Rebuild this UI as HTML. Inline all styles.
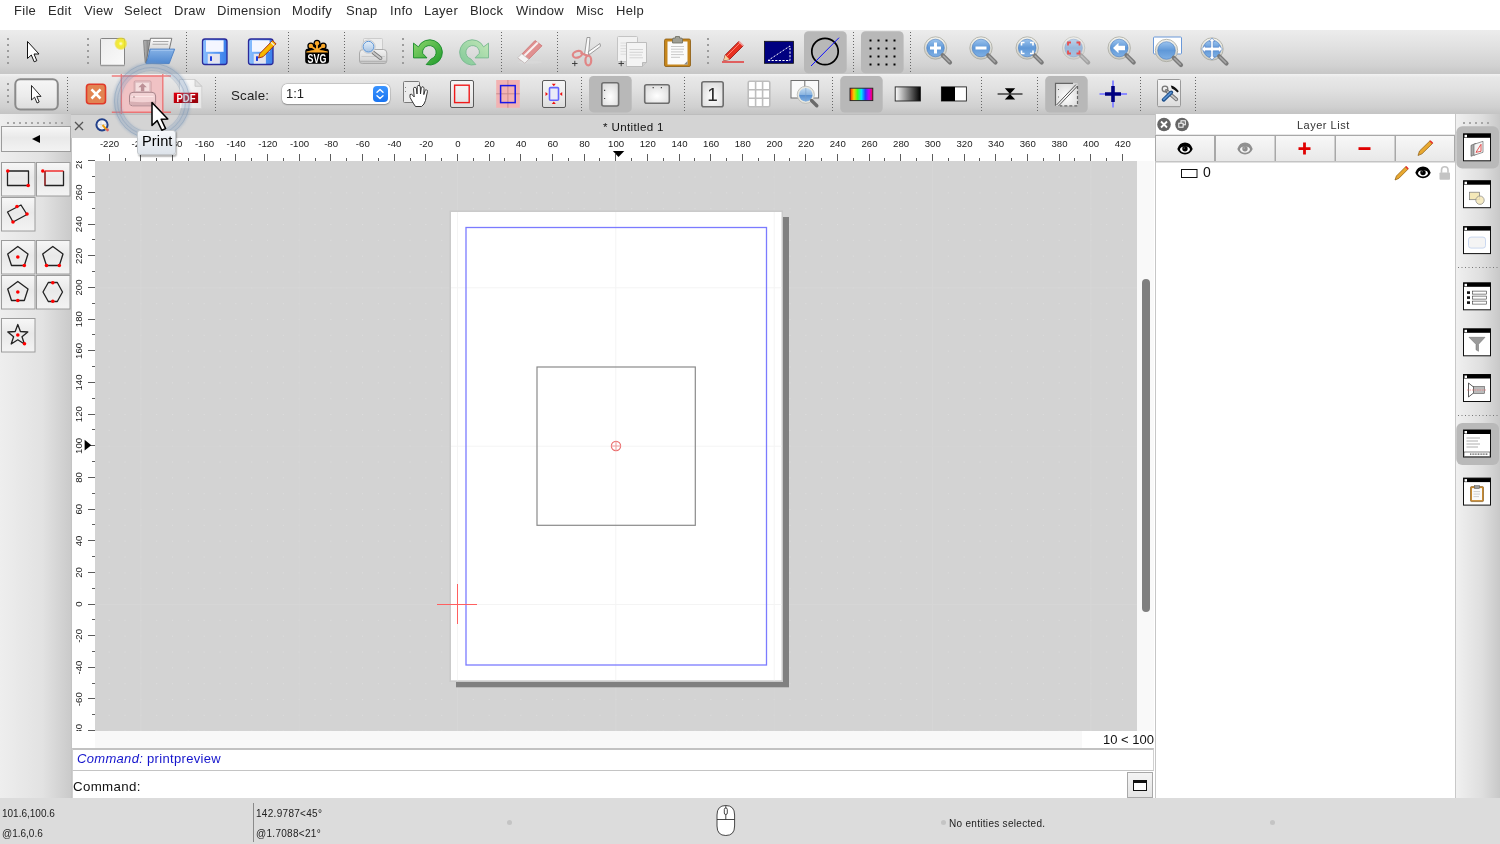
<!DOCTYPE html>
<html><head><meta charset="utf-8">
<style>
*{margin:0;padding:0;box-sizing:border-box}
html,body{width:1500px;height:844px;overflow:hidden;background:#fff;font-family:"Liberation Sans",sans-serif;color:#222}
.a{position:absolute;will-change:transform}
#menubar{left:0;top:0;width:1500px;height:30px;background:#fff}
#menubar span{position:absolute;will-change:transform;top:2.5px;font-size:13px;letter-spacing:0.3px;color:#2a2a2a;line-height:16px}
#tb1{left:0;top:30px;width:1500px;height:44px;background:linear-gradient(#ececec,#e2e2e2 35%,#d2d2d2 80%,#c6c6c6)}
#tb2{left:0;top:74px;width:1500px;height:40px;background:linear-gradient(#f2f2f2,#e8e8e8 8%,#e0e0e0 40%,#d0d0d0 82%,#c4c4c4)}
.hd{position:absolute;width:2px;background-image:linear-gradient(#9a9a9a 50%,transparent 50%);background-size:2px 6px}
.sep{position:absolute;width:1px;background-image:linear-gradient(#777 50%,transparent 50%);background-size:1px 3px}
.chk{position:absolute;background:#b9b9b9;border-radius:5px}
#toolbox{left:0;top:114px;width:71px;height:684px;background:linear-gradient(90deg,#eeeeee,#e2e2e2 60%,#cacaca)}
#doc{left:71px;top:114px;width:1084px;height:684px;background:#d4d4d4}
#dochead{left:71px;top:114px;width:1084px;height:24px;background:#d4d4d4;border-top:1px solid #bdbdbd}
#hruler{left:72px;top:138px;width:1082px;height:23px;background:#fff}
#vruler{left:72px;top:161px;width:23px;height:570px;background:#fff}
#canvas{left:95px;top:161px;width:1042px;height:570px;background:#d3d3d3;overflow:hidden}
#vscroll{left:1137px;top:161px;width:17px;height:570px;background:#f9f9f9}
#hstrip{left:72px;top:731px;width:1082px;height:17px;background:linear-gradient(90deg,#fff 23px,#f8f8f8 23px)}
#cmdhist{left:72px;top:748px;width:1082px;height:23px;background:#fff;border-top:2px solid #c2c2c2;border-bottom:1px solid #c4c4c4;border-left:1px solid #d0d0d0;border-right:1px solid #d0d0d0}
#cmdin{left:72px;top:771px;width:1082px;height:27px;background:#fff;border-left:1px solid #d0d0d0}
#layer{left:1155px;top:114px;width:300px;height:684px;background:#fff;border-left:1px solid #c6c6c6}
#dock{left:1455px;top:114px;width:45px;height:684px;background:linear-gradient(90deg,#f0f0f0,#dedede 60%,#c8c8c8);border-left:1px solid #c8c8c8}
#status{left:0;top:798px;width:1500px;height:46px;background:#dcdcdc}
.st{position:absolute;will-change:transform;font-size:10px;color:#222;line-height:12px}
</style></head><body>
<div id="menubar" class="a">
<span style="left:14px">File</span><span style="left:47.5px">Edit</span><span style="left:83.5px">View</span><span style="left:124px">Select</span><span style="left:174px">Draw</span><span style="left:217px">Dimension</span><span style="left:292px">Modify</span><span style="left:346px">Snap</span><span style="left:389.5px">Info</span><span style="left:424px">Layer</span><span style="left:469.5px">Block</span><span style="left:515.5px">Window</span><span style="left:576px">Misc</span><span style="left:616px">Help</span>
</div>
<div id="tb1" class="a"></div>
<svg class="a" style="left:0;top:30px" width="1500" height="44" viewBox="0 30 1500 44">
<defs>
<radialGradient id="glow" cx="0.5" cy="0.5" r="0.5"><stop offset="0" stop-color="#fffde0"/><stop offset="0.35" stop-color="#f4ee30"/><stop offset="0.75" stop-color="#eee020" stop-opacity="0.8"/><stop offset="1" stop-color="#eee020" stop-opacity="0"/></radialGradient>
<linearGradient id="paperg" x1="0" y1="0" x2="1" y2="1"><stop offset="0" stop-color="#ececec"/><stop offset="1" stop-color="#fafafa"/></linearGradient>
<linearGradient id="flop" x1="0" y1="0" x2="1" y2="0"><stop offset="0" stop-color="#8cc0ff"/><stop offset="0.5" stop-color="#5b9cf4"/><stop offset="1" stop-color="#3a7eea"/></linearGradient>
<linearGradient id="lens" x1="0" y1="0" x2="0" y2="1"><stop offset="0" stop-color="#9cc4ee"/><stop offset="0.5" stop-color="#5f98d8"/><stop offset="1" stop-color="#7fb0e4"/></linearGradient>
<linearGradient id="lensring" x1="0" y1="0" x2="0" y2="1"><stop offset="0" stop-color="#f4f4ee"/><stop offset="1" stop-color="#c8c8c0"/></linearGradient>
<linearGradient id="undog" x1="0" y1="0" x2="1" y2="1"><stop offset="0" stop-color="#8ed86e"/><stop offset="1" stop-color="#1f9a2a"/></linearGradient>
<linearGradient id="redog" x1="1" y1="0" x2="0" y2="1"><stop offset="0" stop-color="#c4e8b8"/><stop offset="1" stop-color="#80c898"/></linearGradient>
<linearGradient id="prn" x1="0" y1="0" x2="0" y2="1"><stop offset="0" stop-color="#f2f2f2"/><stop offset="1" stop-color="#cfcfcf"/></linearGradient>
<linearGradient id="fold" x1="0" y1="0" x2="0" y2="1"><stop offset="0" stop-color="#86b2e6"/><stop offset="1" stop-color="#4f88d0"/></linearGradient>
<g id="mag"><circle cx="0" cy="0" r="11.2" fill="url(#lensring)" stroke="#a8a8a0" stroke-width="0.8"/><circle cx="0" cy="0" r="8.8" fill="url(#lens)" stroke="#4a7cc0" stroke-width="0.6"/><path d="M7.2 7.2 L14.5 14.5" stroke="#7a7a7a" stroke-width="4.2" stroke-linecap="round"/><path d="M8 8 L13.8 13.8" stroke="#a8a8a8" stroke-width="1.6" stroke-linecap="round"/></g>
</defs>
<g fill="#9c9c9c">
<rect x="7" y="38" width="2" height="2"/><rect x="7" y="44" width="2" height="2"/><rect x="7" y="50" width="2" height="2"/><rect x="7" y="56" width="2" height="2"/><rect x="7" y="62" width="2" height="2"/>
<rect x="87" y="38" width="2" height="2"/><rect x="87" y="44" width="2" height="2"/><rect x="87" y="50" width="2" height="2"/><rect x="87" y="56" width="2" height="2"/><rect x="87" y="62" width="2" height="2"/>
<rect x="402" y="38" width="2" height="2"/><rect x="402" y="44" width="2" height="2"/><rect x="402" y="50" width="2" height="2"/><rect x="402" y="56" width="2" height="2"/><rect x="402" y="62" width="2" height="2"/>
<rect x="707" y="38" width="2" height="2"/><rect x="707" y="44" width="2" height="2"/><rect x="707" y="50" width="2" height="2"/><rect x="707" y="56" width="2" height="2"/><rect x="707" y="62" width="2" height="2"/>
</g>
<g stroke="#666" stroke-width="1" stroke-dasharray="1 2">
<path d="M186.5 32V72M288.5 32V72M344.5 32V72M501.5 32V72M557.5 32V72M853.5 32V72M910.5 32V72"/>
</g>
<!-- pointer -->
<path d="M27.5 41.5 L27.5 58.5 L31.3 55 L34.2 61.8 L36.8 60.7 L34 54 L39 54 Z" fill="#fff" stroke="#111" stroke-width="1" stroke-linejoin="round"/>
<!-- new doc -->
<rect x="100.5" y="38.5" width="24" height="27" rx="1" fill="url(#paperg)" stroke="#858585"/>
<path d="M100.5 65.5H124.5" stroke="#9a9a9a" stroke-width="1.5"/>
<circle cx="120.8" cy="43.6" r="6.8" fill="url(#glow)"/>
<!-- open folder -->
<linearGradient id="fback" x1="0" y1="0" x2="1" y2="0"><stop offset="0" stop-color="#bdbdbd"/><stop offset="0.6" stop-color="#8c8c8c"/><stop offset="1" stop-color="#d0d0d0"/></linearGradient>
<linearGradient id="fpaper" x1="0" y1="0" x2="0" y2="1"><stop offset="0" stop-color="#ffffff"/><stop offset="0.5" stop-color="#d4d4d4"/><stop offset="1" stop-color="#b8b8b8"/></linearGradient>
<path d="M143.6 40.4 L150.5 40.4 L147 62.8 L145.3 62.8 Q144.2 52 143.6 40.4 Z" fill="url(#fback)" stroke="#6e6e6e" stroke-width="0.8" stroke-linejoin="round"/>
<path d="M150.5 38.3 L171.8 38.3 L169.4 49 L146.2 62.3 Z" fill="url(#fpaper)" stroke="#6c6c6c" stroke-width="0.9" stroke-linejoin="round"/>
<path d="M153 41.5 H168.5 M152.5 44.2 H168" stroke="#a8a8a8" stroke-width="1.1"/>
<path d="M150 49.1 L174.7 49.1 L169.2 63.6 L146 63.6 Q148.6 58 150 49.1 Z" fill="url(#fold)" stroke="#4a7ec4" stroke-width="0.9" stroke-linejoin="round"/>
<path d="M150.8 50.3 H173.2" stroke="#a8c8f0" stroke-width="0.9"/>
<!-- save -->
<rect x="202.5" y="39" width="24.5" height="25.5" rx="2.5" fill="url(#flop)" stroke="#2a2a9a" stroke-width="1.3"/>
<rect x="206" y="40.3" width="17.6" height="11.5" fill="#f4f6ff"/>
<rect x="207.7" y="53.8" width="12.2" height="9.8" fill="#e4e4ee"/>
<rect x="210" y="56.3" width="2" height="4.6" fill="#1a3adf"/>
<!-- save as -->
<rect x="248.5" y="39" width="24.5" height="25.5" rx="2.5" fill="url(#flop)" stroke="#2a2a9a" stroke-width="1.3"/>
<rect x="252" y="40.3" width="17.6" height="11.5" fill="#f4f6ff"/>
<rect x="253.7" y="53.8" width="12.2" height="9.8" fill="#e4e4ee"/>
<rect x="256" y="56.3" width="2" height="4.6" fill="#1a3adf"/>
<path d="M258.5 58 L259.8 53.6 L272.6 40.5 L276 43.8 L263 56.8 Z" fill="#f8b800" stroke="#a02010" stroke-width="0.9"/>
<path d="M271 42.2 L274.4 45.5" stroke="#f0f0f0" stroke-width="1.2"/>
<!-- SVG -->
<rect x="305.2" y="48.6" width="23.8" height="15.2" rx="3.2" fill="#000"/>
<g fill="#000"><circle cx="317" cy="43.2" r="3.5"/><circle cx="310.8" cy="45.9" r="3.5"/><circle cx="323.2" cy="45.9" r="3.5"/></g>
<g stroke="#000" stroke-width="4.6" stroke-linecap="round"><path d="M317 50 V43.2 M317 50 L310.8 45.9 M317 50 L323.2 45.9"/></g>
<g fill="#f9a82a"><circle cx="317" cy="43.2" r="2.2"/><circle cx="310.8" cy="45.9" r="2.2"/><circle cx="323.2" cy="45.9" r="2.2"/></g>
<g stroke="#f9a82a" stroke-width="1.9" stroke-linecap="round"><path d="M317 50.5 V43.2 M317 50.5 L310.8 45.9 M317 50.5 L323.2 45.9"/></g>
<path d="M306.8 52 Q312 50.2 317 50.6 Q322 50.2 327.4 52 Z" fill="#f9a82a" stroke="#f9a82a" stroke-width="1.2" stroke-linejoin="round"/>
<text x="317" y="62.8" font-family="Liberation Sans" font-weight="bold" font-size="13.4" fill="#fff" text-anchor="middle" textLength="18.8" lengthAdjust="spacingAndGlyphs">SVG</text>
<!-- print preview -->
<linearGradient id="pglass" x1="0" y1="0" x2="0" y2="1"><stop offset="0" stop-color="#e4eef8"/><stop offset="0.55" stop-color="#c4d8ee"/><stop offset="1" stop-color="#a4c0de"/></linearGradient>
<rect x="363.5" y="38.5" width="19" height="13" rx="1" fill="#ededed" stroke="#c4c4c4" stroke-width="0.8"/>
<path d="M359.5 53 Q359.5 49.5 363 49.5 L383.5 49.5 Q386.8 49.5 386.8 53 L386.8 61 Q386.8 63.5 384 63.5 L362.3 63.5 Q359.5 63.5 359.5 61 Z" fill="url(#prn)" stroke="#a4a4a4" stroke-width="0.9"/>
<path d="M361.5 56.5 H385" stroke="#c4c4c4" stroke-width="0.8"/>
<path d="M360 61.5 H386.3" stroke="#b4b4b4" stroke-width="1.6"/>
<path d="M373.2 52.5 L380.6 58.2" stroke="#777" stroke-width="3.6" stroke-linecap="round"/>
<path d="M373.2 52.5 L380.6 58.2" stroke="#c8c8c8" stroke-width="2" stroke-linecap="round"/>
<circle cx="368.5" cy="46.7" r="6.7" fill="#f4f4f4" stroke="#bdbdbd" stroke-width="0.7"/>
<circle cx="368.5" cy="46.7" r="5.4" fill="url(#pglass)" stroke="#4a88d0" stroke-width="0.9"/>
<!-- undo -->
<path d="M413.5 43.1 L413.5 57.9 L427 57.9 L422.6 53.3 A6.8 6.8 0 1 1 431.2 58.9 L426.2 64.5 A12.6 12.6 0 1 0 418.4 46.9 Z" fill="url(#undog)" stroke="#178a2a" stroke-width="0.9" stroke-linejoin="round"/>
<!-- redo -->
<path d="M488.5 43.1 L488.5 57.9 L475 57.9 L479.4 53.3 A6.8 6.8 0 1 0 470.8 58.9 L475.8 64.5 A12.6 12.6 0 1 1 483.6 46.9 Z" fill="url(#redog)" stroke="#78b890" stroke-width="0.9" stroke-linejoin="round"/>
<!-- eraser -->
<ellipse cx="530" cy="62.2" rx="12" ry="1.6" fill="#d8d8d8"/>
<path d="M518 58 L535 40.5 L542 45.8 L525 63 Z" fill="#e09090" stroke="#c86a6a" stroke-width="0.7"/>
<path d="M520.5 59.5 L537.8 42.5" stroke="#f8f0f0" stroke-width="2"/>
<path d="M517.6 57.8 L521.6 53.8 L528.8 59.2 L524.8 63.2 Z" fill="#f4f4f4" stroke="#bbb" stroke-width="0.7"/>
<!-- cut -->
<path d="M584.5 55 L587 37.5 L590 37.5 L588.5 55 Z" fill="#fafafa" stroke="#888" stroke-width="0.8"/>
<path d="M588 52 L600 43.5 L600.5 46.3 L589.5 54.5 Z" fill="#fafafa" stroke="#888" stroke-width="0.8"/>
<ellipse cx="577.5" cy="54.3" rx="4.8" ry="3.2" transform="rotate(-18 577.5 54.3)" fill="none" stroke="#e08686" stroke-width="2.2"/>
<ellipse cx="588.3" cy="60.5" rx="2.9" ry="4.8" fill="none" stroke="#e08686" stroke-width="2.2"/>
<path d="M580.5 53 L587 55.5" stroke="#e08686" stroke-width="2.2"/>
<path d="M572 63.5H577.5M574.8 60.8V66.2" stroke="#333" stroke-width="0.9"/>
<!-- copy -->
<rect x="617.5" y="36.5" width="20" height="25" rx="1" fill="#f2f2f2" stroke="#c4c4c4"/>
<path d="M620.5 43H630M620.5 45.8H630M620.5 48.6H630M620.5 51.4H630M620.5 54.2H630" stroke="#dadada" stroke-width="0.9"/>
<path d="M626.5 42.5 H646.5 V62.5 L642.5 66.5 H626.5 Z" fill="#f4f4f4" stroke="#bdbdbd"/>
<path d="M642.5 66.5 V62.5 H646.5" fill="#cfcfcf" stroke="#b0b0b0" stroke-width="0.8"/>
<path d="M629.5 49.5H643M629.5 52.3H643M629.5 55H642M629.5 57.8H643" stroke="#d0d0d0" stroke-width="0.9"/>
<path d="M618.5 63.5H624M621.2 60.8V66.2" stroke="#333" stroke-width="0.9"/>
<!-- paste -->
<rect x="664.5" y="39" width="26" height="27.5" rx="1.5" fill="#c6861c" stroke="#8a5a10" stroke-width="0.8"/>
<rect x="667.5" y="41.5" width="20" height="23" fill="#fbfbfb"/>
<path d="M684 64.5 L687.5 61 L687.5 64.5 Z" fill="#888"/>
<path d="M672.5 39.5 Q672.5 38 674 38 L675.5 38 L675.5 36.5 L679.5 36.5 L679.5 38 L681 38 Q682.5 38 682.5 39.5 L682.5 43 L672.5 43 Z" fill="#9e9e94" stroke="#6c6c60" stroke-width="0.8"/>
<path d="M671 46.5H684M671 49.2H684M671 51.9H683M671 54.6H684M671 57.3H680" stroke="#c8c8c8" stroke-width="1"/>
<!-- pencil -->
<path d="M722 62H744" stroke="#e81010" stroke-width="1.2"/>
<path d="M723.8 60.5 L725.2 55 L738.8 41.4 L743.2 45.8 L729.6 59.4 Z" fill="#e83020" stroke="#8a1010" stroke-width="0.8"/>
<path d="M723.8 60.5 L725.2 55 L729.6 59.4 Z" fill="#f2d2a0"/>
<path d="M738.8 41.4 L743.2 45.8" stroke="#f0a0a0" stroke-width="1.6"/>
<path d="M727 56 L740 43" stroke="#ff8070" stroke-width="1"/>
<!-- dim box -->
<rect x="764.5" y="41.3" width="29" height="22" fill="#000080" stroke="#111" stroke-width="0.8"/>
<path d="M768 60.5 L790 60.5 L790 46 Z" fill="none" stroke="#fff" stroke-width="1" stroke-dasharray="2.2 1.4"/>
<!-- circle tool checked -->
<rect x="804" y="31.2" width="42.7" height="42" rx="4.5" fill="#b8b8b8"/>
<circle cx="825" cy="51.5" r="13.2" fill="none" stroke="#000" stroke-width="1.7"/>
<path d="M811 66 L839 37.7" stroke="#1010ff" stroke-width="1"/>
<!-- grid checked -->
<rect x="861" y="31.2" width="42.6" height="42" rx="4.5" fill="#b8b8b8"/>
<g fill="#000"><rect x="869.5" y="39.5" width="2" height="2"/><rect x="877.5" y="39.5" width="2" height="2"/><rect x="885.5" y="39.5" width="2" height="2"/><rect x="893.5" y="39.5" width="2" height="2"/>
<rect x="869.5" y="47.5" width="2" height="2"/><rect x="877.5" y="47.5" width="2" height="2"/><rect x="885.5" y="47.5" width="2" height="2"/><rect x="893.5" y="47.5" width="2" height="2"/>
<rect x="869.5" y="55.5" width="2" height="2"/><rect x="877.5" y="55.5" width="2" height="2"/><rect x="885.5" y="55.5" width="2" height="2"/><rect x="893.5" y="55.5" width="2" height="2"/>
<rect x="869.5" y="63.5" width="2" height="2"/><rect x="877.5" y="63.5" width="2" height="2"/><rect x="885.5" y="63.5" width="2" height="2"/><rect x="893.5" y="63.5" width="2" height="2"/></g>
<!-- zoom in -->
<use href="#mag" x="935.5" y="48"/>
<path d="M930 48H941M935.5 42.5V53.5" stroke="#fff" stroke-width="3"/>
<!-- zoom out -->
<use href="#mag" x="981" y="48"/>
<path d="M975.5 48H986.5" stroke="#fff" stroke-width="3"/>
<!-- zoom auto -->
<use href="#mag" x="1027.2" y="48"/>
<path d="M1021.5 45.5V42.5H1024.5M1030 42.5H1033V45.5M1033 50.5V53.5H1030M1024.5 53.5H1021.5V50.5" stroke="#fff" stroke-width="1.6" fill="none"/>
<!-- zoom prev (disabled look) -->
<g opacity="0.55"><use href="#mag" x="1073.6" y="48"/></g>
<path d="M1068 45.5V42.5H1071M1076.5 42.5H1079.5V45.5M1079.5 50.5V53.5H1076.5M1071 53.5H1068V50.5" stroke="#e85050" stroke-width="1.8" fill="none"/>
<!-- zoom back -->
<use href="#mag" x="1119.2" y="48"/>
<path d="M1113 48 L1118.5 42.8 V45.8 H1125 V50.2 H1118.5 V53.2 Z" fill="#fff"/>
<!-- zoom window -->
<rect x="1153.5" y="37" width="28" height="17" rx="1" fill="#fff" stroke="#6a98d8" stroke-width="1"/>
<use href="#mag" x="1166.5" y="50.5"/>
<!-- pan -->
<use href="#mag" x="1212" y="49"/>
<path d="M1212 38 L1215 41.5 H1213.2 V47.2 H1218.8 V45.4 L1222.5 49 L1218.8 52.6 V50.8 H1213.2 V56.5 H1215 L1212 60 L1209 56.5 H1210.8 V50.8 H1205.2 V52.6 L1201.5 49 L1205.2 45.4 V47.2 H1210.8 V41.5 H1209 Z" fill="#fff" stroke="#4a7cc8" stroke-width="0.6"/>
</svg>

<div id="tb2" class="a"></div>
<svg class="a" style="left:0;top:74px" width="1500" height="40" viewBox="0 74 1500 40">
<defs>
<linearGradient id="btng" x1="0" y1="0" x2="0" y2="1"><stop offset="0" stop-color="#f6f6f6"/><stop offset="0.55" stop-color="#ececec"/><stop offset="1" stop-color="#dcdcdc"/></linearGradient>
<radialGradient id="pageg" cx="0.5" cy="0.6" r="0.6"><stop offset="0" stop-color="#ffffff"/><stop offset="1" stop-color="#dedede"/></radialGradient>
<linearGradient id="spec" x1="0" y1="0" x2="1" y2="0"><stop offset="0" stop-color="#ff2000"/><stop offset="0.17" stop-color="#ffd000"/><stop offset="0.33" stop-color="#40ff20"/><stop offset="0.5" stop-color="#00e8ff"/><stop offset="0.67" stop-color="#2040ff"/><stop offset="0.83" stop-color="#c000ff"/><stop offset="1" stop-color="#ff0040"/></linearGradient>
<linearGradient id="bwg" x1="0" y1="0" x2="1" y2="0"><stop offset="0" stop-color="#fff"/><stop offset="1" stop-color="#000"/></linearGradient>
<linearGradient id="lens2" x1="0" y1="0" x2="0" y2="1"><stop offset="0" stop-color="#c4dcf2"/><stop offset="0.5" stop-color="#8ab4e0"/><stop offset="0.55" stop-color="#5a90d0"/><stop offset="1" stop-color="#86b4e4"/></linearGradient>
</defs>
<g fill="#9c9c9c"><rect x="7" y="83" width="2" height="2"/><rect x="7" y="89" width="2" height="2"/><rect x="7" y="95" width="2" height="2"/><rect x="7" y="101" width="2" height="2"/></g>
<g stroke="#666" stroke-width="1" stroke-dasharray="1 2"><path d="M67.5 77V111M215.5 77V111M581.5 77V111M684.5 77V111M832.5 77V111M981.5 77V111M1037.5 77V111M1140.5 77V111M1195.5 77V111"/></g>
<!-- select button -->
<rect x="15.3" y="79.3" width="42.5" height="30.2" rx="5" fill="url(#btng)" stroke="#8a8a8a" stroke-width="2"/>
<path d="M31.5 85.5 L31.5 100 L34.6 97.2 L37 103 L39.2 102 L36.8 96.4 L41 96.4 Z" fill="#fff" stroke="#111" stroke-width="0.9" stroke-linejoin="round"/>
<!-- X close -->
<rect x="86.5" y="84.2" width="19" height="19.5" rx="3" fill="#e28452" stroke="#e03a2a" stroke-width="1.6"/>
<path d="M91.5 89.3 L100.5 98.5 M100.5 89.3 L91.5 98.5" stroke="#fff" stroke-width="2.6"/>
<!-- print (highlighted) -->
<rect x="121" y="75.5" width="41.6" height="37" fill="#f0c2c4"/>
<rect x="134.2" y="81" width="16.8" height="12.5" rx="1" fill="#efcdd0" stroke="#c0969a" stroke-width="0.8"/>
<rect x="135.6" y="82.4" width="14" height="9" fill="#f4dede" stroke="#d8b4b8" stroke-width="0.5"/>
<path d="M142.6 83.3 L146.8 87.3 H144.3 V91.2 H140.9 V87.3 H138.4 Z" fill="#bc9096"/>
<path d="M129.5 96 Q129.5 92.3 133 92.3 L152 92.3 Q155.6 92.3 155.6 96 L155.6 102.5 Q155.6 105.8 152.5 105.8 L132.5 105.8 Q129.5 105.8 129.5 102.5 Z" fill="#f2d2d4" stroke="#a8848a" stroke-width="1"/>
<path d="M130 101.5 Q142.5 103 155 101.5 L155 103 Q155 105.3 152.5 105.3 L132.5 105.3 Q130 105.3 130 103 Z" fill="#d8b0b4"/>
<path d="M131.5 96.5 H153.5" stroke="#fbe6e6" stroke-width="1"/>
<circle cx="134" cy="97" r="0.7" fill="#8a6a6e"/>
<path d="M111.8 76 H171 M111.8 112.3 H171 M121.3 67.7 V119 M162.8 67.7 V119" stroke="#f05a5a" stroke-width="1.4" opacity="0.75"/>
<!-- PDF -->
<linearGradient id="pdfg" x1="0" y1="0" x2="1" y2="1"><stop offset="0" stop-color="#e00010"/><stop offset="1" stop-color="#900008"/></linearGradient>
<linearGradient id="pdfpage" x1="0" y1="0" x2="1" y2="1"><stop offset="0" stop-color="#fdfdfd"/><stop offset="1" stop-color="#e4e4e4"/></linearGradient>
<path d="M179.5 79.5 H195 L201.8 86.3 V108.6 H179.5 Z" fill="url(#pdfpage)" stroke="#cfcfcf" stroke-width="0.9"/>
<path d="M195 79.5 V86.3 H201.8 Z" fill="#e0e0e0" stroke="#c4c4c4" stroke-width="0.8"/>
<rect x="173.8" y="92.7" width="24.3" height="10.3" fill="url(#pdfg)"/>
<text x="186" y="101.8" font-family="Liberation Sans" font-weight="bold" font-size="10" fill="#fff" text-anchor="middle" textLength="19" lengthAdjust="spacingAndGlyphs">PDF</text>
<!-- hand page -->
<rect x="403.5" y="81.5" width="16" height="21" rx="1" fill="#ececec" stroke="#7a7a7a" stroke-width="1"/>
<path d="M405 87.5h1M405 91.5h1" stroke="#888"/>
<path d="M412 101 Q409 97 410 94.5 Q411.5 93.5 413 95.5 L414.2 97 L413.5 88.5 Q413.8 87 415.2 87.3 Q416.3 87.6 416.5 89 L417 94 L417.3 86.5 Q417.6 85.2 419 85.4 Q420.3 85.7 420.3 87 L420.5 94 L421.3 87.7 Q421.7 86.5 423 86.8 Q424 87.2 424 88.5 L423.8 94.6 L425 90.5 Q425.6 89.5 426.7 89.9 Q427.7 90.4 427.4 91.7 L425.5 100.5 Q424.5 104.5 421.5 106.5 L415.5 106.5 Q413.8 104 412 101 Z" fill="#fff" stroke="#222" stroke-width="0.9" stroke-linejoin="round"/>
<!-- red rect page button -->
<rect x="450.5" y="80.5" width="23" height="27" rx="1.5" fill="url(#btng)" stroke="#5a5a5a" stroke-width="1"/>
<rect x="454.6" y="85.2" width="14.6" height="17.4" fill="none" stroke="#f01a1a" stroke-width="1.4"/>
<!-- pink grid -->
<rect x="496.2" y="80" width="23.6" height="27.8" fill="#f2b2b2"/>
<path d="M507.9 80V107.8M496.2 93.8H519.8" stroke="#c48888" stroke-width="0.9"/>
<rect x="500.6" y="85.6" width="14.6" height="17" fill="none" stroke="#1818e8" stroke-width="1.5"/>
<!-- center button -->
<rect x="542.5" y="80.5" width="23" height="27" rx="1.5" fill="url(#btng)" stroke="#5a5a5a" stroke-width="1"/>
<rect x="549.5" y="87.6" width="9" height="12.6" rx="1" fill="#eaeaf8" stroke="#6464ff" stroke-width="1.6"/>
<path d="M551.8 83.8H555.8L553.8 86.2Z M551.8 104H555.8L553.8 101.6Z M545.5 92V96L548 94Z M562.2 92V96L559.7 94Z" fill="#ee1010"/>
<!-- portrait checked -->
<rect x="589" y="76" width="42.7" height="36.4" rx="4.5" fill="#b8b8b8"/>
<rect x="601.8" y="82.8" width="16.8" height="23.2" rx="2" fill="url(#pageg)" stroke="#6e6e6e" stroke-width="1.6"/>
<path d="M604 90.3h1.2M604 98.5h1.2" stroke="#444" stroke-width="1.2"/>
<!-- landscape -->
<rect x="644.7" y="84.7" width="24.6" height="18.6" rx="2" fill="url(#pageg)" stroke="#6e6e6e" stroke-width="1.6"/>
<path d="M652.6 87.6h1.2M660.8 87.6h1.2" stroke="#444" stroke-width="1.2"/>
<!-- "1" page -->
<rect x="701.8" y="81.7" width="21.4" height="25.1" rx="2" fill="url(#pageg)" stroke="#6e6e6e" stroke-width="1.6"/>
<text x="712.5" y="101.3" font-family="Liberation Sans" font-size="19" fill="#2a2a2a" text-anchor="middle">1</text>
<!-- 3x3 grid -->
<rect x="748.2" y="81.2" width="21.6" height="25.6" rx="1.5" fill="#fff" stroke="#bdbdbd" stroke-width="1.6"/>
<path d="M755.6 81.2V106.8M762.6 81.2V106.8M748.2 89.7H769.8M748.2 98.2H769.8" stroke="#bdbdbd" stroke-width="1.6"/>
<!-- zoom preview -->
<rect x="791" y="80.5" width="27.6" height="17.5" fill="#fafafa" stroke="#6e6e6e" stroke-width="1"/>
<path d="M804.8 80.5V98" stroke="#6e6e6e" stroke-width="1"/>
<circle cx="805.8" cy="94.8" r="8.6" fill="#e8e8e0" stroke="#b4b4b0" stroke-width="0.8"/>
<circle cx="805.8" cy="94.8" r="6.8" fill="url(#lens2)"/>
<path d="M805.8 88V101.6" stroke="#7aa0c8" stroke-width="0.6"/>
<path d="M811.5 100.5 L816.8 105.8" stroke="#6a6a6a" stroke-width="3.4" stroke-linecap="round"/>
<!-- color checked -->
<rect x="840.2" y="76.1" width="42.5" height="36.4" rx="4.5" fill="#b8b8b8"/>
<rect x="850" y="88.2" width="22.8" height="12.4" fill="url(#spec)" stroke="#222" stroke-width="0.9"/>
<rect x="895.2" y="86.9" width="25.2" height="14.1" fill="url(#bwg)" stroke="#222" stroke-width="0.9"/>
<rect x="941.4" y="86.9" width="25" height="14.1" fill="#fff" stroke="#222" stroke-width="0.9"/>
<rect x="941.4" y="86.9" width="13.6" height="14.1" fill="#000"/>
<!-- hourglass -->
<path d="M997.6 94H1022.5" stroke="#333" stroke-width="1.4"/>
<path d="M1004.8 88.2H1015.2L1010 94L1015.2 99.6H1004.8L1010 94Z" fill="#000"/>
<!-- draft checked -->
<rect x="1045.2" y="76.1" width="42.5" height="36.4" rx="4.5" fill="#b8b8b8"/>
<rect x="1055.5" y="83.3" width="22" height="22.5" fill="url(#pageg)"/>
<path d="M1055.5 105.8V83.3H1073" stroke="#666" stroke-width="1.2" fill="none"/>
<path d="M1077.5 86V105.8H1060" stroke="#666" stroke-width="1.2" fill="none" stroke-dasharray="3 2"/>
<path d="M1056.5 105 L1076 84.5 M1058.5 106 L1077.5 86" stroke="#555" stroke-width="1"/>
<path d="M1058 89.5h1M1058 97h1" stroke="#666"/>
<!-- blue cross -->
<path d="M1099.5 94H1127M1113 80.5V107.5" stroke="#8a8aff" stroke-width="2"/>
<path d="M1105 94H1121M1113 86V102" stroke="#000080" stroke-width="3.6"/>
<!-- tools -->
<rect x="1157.5" y="79.5" width="23" height="27" rx="1" fill="url(#btng)" stroke="#9a9a9a" stroke-width="1"/>
<path d="M1158 106.6 H1180" stroke="#a0a0a0" stroke-width="1.2"/>
<path d="M1166.5 90.8 L1176.3 99.4" stroke="#666" stroke-width="3.6" stroke-linecap="round"/>
<path d="M1166.5 90.8 L1176.3 99.4" stroke="#c4c4c4" stroke-width="2" stroke-linecap="round"/>
<circle cx="1165" cy="89" r="2.8" fill="none" stroke="#777" stroke-width="1.3"/>
<path d="M1163.6 99.8 L1171.3 92.4" stroke="#1e4f8a" stroke-width="3.8" stroke-linecap="round"/>
<path d="M1163.8 99.4 L1171 92.6" stroke="#5a92d0" stroke-width="1.8" stroke-linecap="round"/>
<path d="M1170.8 85.6 Q1175 86.2 1178.8 91.2 L1177.5 92.4 Q1174.5 89.5 1171.8 88.6 Z" fill="#111"/>
</svg>

<div id="toolbox" class="a"></div>
<svg class="a" style="left:0;top:114px" width="72" height="684" viewBox="0 114 72 684">
<defs>
<linearGradient id="tbtn" x1="0" y1="0" x2="0" y2="1"><stop offset="0" stop-color="#f7f7f7"/><stop offset="0.45" stop-color="#e9e9e9"/><stop offset="1" stop-color="#f3f3f3"/></linearGradient>
</defs>
<g fill="#a6a6a6"><rect x="7" y="122" width="2" height="2"/><rect x="13" y="122" width="2" height="2"/><rect x="19" y="122" width="2" height="2"/><rect x="25" y="122" width="2" height="2"/><rect x="31" y="122" width="2" height="2"/><rect x="37" y="122" width="2" height="2"/><rect x="43" y="122" width="2" height="2"/><rect x="49" y="122" width="2" height="2"/><rect x="55" y="122" width="2" height="2"/><rect x="61" y="122" width="2" height="2"/></g>
<rect x="1.5" y="126.5" width="69.2" height="25" fill="url(#tbtn)" stroke="#9c9c9c" stroke-width="1"/>
<path d="M32 139 L40 135 L40 143 Z" fill="#000"/>
<g stroke="#9c9c9c" stroke-width="1" fill="url(#tbtn)">
<rect x="1.5" y="162.5" width="33.5" height="33.5"/><rect x="36.5" y="162.5" width="33.5" height="33.5"/>
<rect x="1.5" y="197.5" width="33.5" height="33.5"/>
<rect x="1.5" y="240.5" width="33.5" height="33.5"/><rect x="36.5" y="240.5" width="33.5" height="33.5"/>
<rect x="1.5" y="275.5" width="33.5" height="33.5"/><rect x="36.5" y="275.5" width="33.5" height="33.5"/>
<rect x="1.5" y="318.5" width="33.5" height="33.5"/>
</g>
<g fill="none" stroke="#222" stroke-width="1.3" stroke-linejoin="round">
<rect x="7.5" y="171" width="21" height="14.5"/>
<path d="M45 171 V185.5 H63.5 V171"/>
<path d="M7.5 212 L21 205 L27 214.5 L13 222 Z"/>
<path d="M17.8 246.5 L28 254 L24.3 265.5 L11.5 265.5 L7.7 254 Z"/>
<path d="M52.8 246.5 L63 254 L59.3 265.5 L46.5 265.5 L42.7 254 Z"/>
<path d="M17.8 281.5 L28 289 L24.3 300.5 L11.5 300.5 L7.7 289 Z"/>
<path d="M48.3 282.5 L57.3 282.5 L62.5 292 L57.3 301.5 L48.3 301.5 L43 292 Z"/>
<path d="M17.8 324.5 L20.4 331.5 L27.8 332 L22 336.7 L24.4 344 L17.8 339.8 L11.2 344 L13.6 336.7 L7.8 332 L15.2 331.5 Z"/>
</g>
<path d="M45 171 H63.5" stroke="#f01010" stroke-width="1.3"/>
<path d="M45 171 V185.5" stroke="#f01010" stroke-width="1.3" opacity="0.6"/>
<g fill="#ff0000">
<circle cx="7.8" cy="171" r="1.8"/><circle cx="28.2" cy="185.5" r="1.8"/>
<circle cx="42.8" cy="171" r="1.8"/>
<circle cx="17" cy="206.5" r="1.8"/><circle cx="27" cy="214" r="1.8"/><circle cx="13" cy="222" r="1.8"/>
<circle cx="17.8" cy="257" r="1.8"/><circle cx="24.3" cy="265.5" r="1.8"/>
<circle cx="46.5" cy="265.5" r="1.8"/><circle cx="59.3" cy="265.5" r="1.8"/>
<circle cx="17.8" cy="292" r="1.8"/><circle cx="17.8" cy="300.5" r="1.8"/>
<circle cx="52.8" cy="282.8" r="1.8"/><circle cx="52.8" cy="301.2" r="1.8"/>
<circle cx="17.8" cy="335" r="1.8"/><circle cx="24.5" cy="343.8" r="1.8"/>
</g>
<rect x="71" y="114" width="1" height="684" fill="#c4c4c4"/>
</svg>

<div id="dochead" class="a"></div>
<div id="hruler" class="a"></div>
<div id="vruler" class="a"></div>
<svg class="a" style="left:0;top:0" width="1500" height="844" viewBox="0 0 1500 844"><defs><clipPath id="cvc"><rect x="95" y="161" width="1042" height="570"/></clipPath></defs><g clip-path="url(#cvc)"><rect x="95" y="161" width="1042" height="570" fill="#d3d3d3"/><defs><pattern id="dotp" patternUnits="userSpaceOnUse" x="108.67" y="160.67" width="15.8333" height="15.8333"><rect width="1" height="1" fill="#dddddd"/></pattern></defs><rect x="95" y="161" width="1042" height="570" fill="url(#dotp)"/><path d="M140.8 161V731 M299.2 161V731 M457.5 161V731 M615.8 161V731 M774.2 161V731 M932.5 161V731 M1090.8 161V731 M95 604.5H1137 M95 446.2H1137 M95 287.8H1137" stroke="#d6d6d6" stroke-width="1" fill="none"/><rect x="456" y="217" width="333" height="470.3" fill="#808080"/><rect x="449.5" y="210.5" width="333.5" height="471.5" fill="#cacaca"/><rect x="451" y="212" width="330.5" height="468.3" fill="#fff"/><path d="M457.5 212V680.3 M615.8 212V680.3 M774.2 212V680.3 M451 604.5H781.5 M451 446.2H781.5 M451 287.8H781.5" stroke="#f4f4f4" stroke-width="1" fill="none"/><rect x="466" y="227.5" width="300.5" height="437.5" fill="none" stroke="#7b7bff" stroke-width="1.3"/><rect x="537" y="367" width="158.3" height="158.3" fill="none" stroke="#8a8a8a" stroke-width="1.2"/><circle cx="616" cy="446" r="4.6" fill="none" stroke="#ea6a6a" stroke-width="1.2"/><path d="M611 446H621M616 441V451" stroke="#f0a0a0" stroke-width="1"/><path d="M437 604.5H477M457.5 584V624" stroke="#ff6060" stroke-width="1"/></g></svg>
<div id="vscroll" class="a"></div>
<div id="hstrip" class="a"></div>
<div id="cmdhist" class="a"></div>
<div id="cmdin" class="a"></div>
<div id="layer" class="a"></div>
<div id="dock" class="a"></div>
<svg class="a" style="left:1455px;top:114px" width="45" height="684" viewBox="1455 114 45 684">
<rect x="1456.3" y="126.3" width="42.7" height="42.2" rx="6" fill="#b9b9b9"/>
<rect x="1456.3" y="423" width="42.7" height="42" rx="6" fill="#b9b9b9"/>
<g fill="#a6a6a6"><rect x="1463" y="122" width="2" height="2"/><rect x="1469" y="122" width="2" height="2"/><rect x="1475" y="122" width="2" height="2"/><rect x="1481" y="122" width="2" height="2"/><rect x="1487" y="122" width="2" height="2"/></g>
<path d="M1458 267.5H1500M1458 415.5H1500" stroke="#777" stroke-width="1" stroke-dasharray="1 2.5"/>
<rect x="1463.5" y="133.8" width="27" height="27" fill="#fff" stroke="#111" stroke-width="1"/>
<rect x="1463.5" y="133.8" width="27" height="4" fill="#000"/>
<rect x="1464.5" y="134.8" width="2.5" height="2.5" fill="#fff"/>
<rect x="1463.5" y="180.7" width="27" height="27" fill="#fff" stroke="#111" stroke-width="1"/>
<rect x="1463.5" y="180.7" width="27" height="4" fill="#000"/>
<rect x="1464.5" y="181.7" width="2.5" height="2.5" fill="#fff"/>
<rect x="1463.5" y="226.6" width="27" height="27" fill="#fff" stroke="#111" stroke-width="1"/>
<rect x="1463.5" y="226.6" width="27" height="4" fill="#000"/>
<rect x="1464.5" y="227.6" width="2.5" height="2.5" fill="#fff"/>
<rect x="1463.5" y="282.8" width="27" height="27" fill="#fff" stroke="#111" stroke-width="1"/>
<rect x="1463.5" y="282.8" width="27" height="4" fill="#000"/>
<rect x="1464.5" y="283.8" width="2.5" height="2.5" fill="#fff"/>
<rect x="1463.5" y="328.8" width="27" height="27" fill="#fff" stroke="#111" stroke-width="1"/>
<rect x="1463.5" y="328.8" width="27" height="4" fill="#000"/>
<rect x="1464.5" y="329.8" width="2.5" height="2.5" fill="#fff"/>
<rect x="1463.5" y="374.5" width="27" height="27" fill="#fff" stroke="#111" stroke-width="1"/>
<rect x="1463.5" y="374.5" width="27" height="4" fill="#000"/>
<rect x="1464.5" y="375.5" width="2.5" height="2.5" fill="#fff"/>
<rect x="1463.5" y="430.0" width="27" height="27" fill="#fff" stroke="#111" stroke-width="1"/>
<rect x="1463.5" y="430.0" width="27" height="4" fill="#000"/>
<rect x="1464.5" y="431.0" width="2.5" height="2.5" fill="#fff"/>
<rect x="1463.5" y="478.1" width="27" height="27" fill="#fff" stroke="#111" stroke-width="1"/>
<rect x="1463.5" y="478.1" width="27" height="4" fill="#000"/>
<rect x="1464.5" y="479.1" width="2.5" height="2.5" fill="#fff"/>
<path d="M1471 145.3 L1476 143.3 L1476 154.3 L1471 156.3 Z" fill="#aaa" stroke="#555" stroke-width="0.6"/>
<path d="M1474 144.3 L1483 141.3 L1483 152.3 L1474 155.3 Z" fill="#f4f4f4" stroke="#555" stroke-width="0.6"/>
<path d="M1476 152.3 L1481 144.3 L1481 151.3 Z" fill="none" stroke="#e03030" stroke-width="0.8"/>
<rect x="1469.5" y="192.2" width="10" height="7.5" fill="#f4e8b8" stroke="#777" stroke-width="0.7"/>
<circle cx="1480" cy="200.2" r="4.2" fill="#f4e8b8" fill-opacity="0.85" stroke="#888" stroke-width="0.7"/>
<rect x="1468.5" y="237.1" width="17" height="11" rx="2.5" fill="#f4f4f4" stroke="#c4d4ee" stroke-width="0.9"/>
<rect x="1467" y="291.3" width="3" height="2.6" fill="#111"/><rect x="1472.5" y="291.1" width="14" height="3" fill="#fff" stroke="#333" stroke-width="0.6"/>
<rect x="1467" y="296.3" width="3" height="2.6" fill="#111"/><rect x="1472.5" y="296.1" width="14" height="3" fill="#fff" stroke="#333" stroke-width="0.6"/>
<rect x="1467" y="301.3" width="3" height="2.6" fill="#111"/><rect x="1472.5" y="301.1" width="14" height="3" fill="#fff" stroke="#333" stroke-width="0.6"/>
<path d="M1469 337.3 H1485 L1478.5 344.3 V351.3 L1476 349.8 V344.3 Z" fill="#9a9a9a" stroke="#666" stroke-width="0.5"/>
<path d="M1468.5 383.0 L1473.5 387.0 V393.0 L1468.5 397.0 Z" fill="#fff" stroke="#333" stroke-width="0.8"/>
<rect x="1473.5" y="386.5" width="11" height="7" fill="#bbb" stroke="#555" stroke-width="0.6"/>
<path d="M1467 390.0H1487" stroke="#f08080" stroke-width="0.8" stroke-dasharray="1.5 1"/>
<path d="M1466.5 438.0H1480" stroke="#999" stroke-width="0.8"/>
<path d="M1466.5 441.0H1478" stroke="#999" stroke-width="0.8"/>
<path d="M1466.5 444.0H1480" stroke="#999" stroke-width="0.8"/>
<path d="M1466.5 447.0H1478" stroke="#999" stroke-width="0.8"/>
<rect x="1464" y="452.0" width="26" height="4.5" fill="#fff" stroke="#333" stroke-width="0.6"/>
<path d="M1470 454.2H1488" stroke="#555" stroke-width="1.2" stroke-dasharray="1 0.6"/>
<rect x="1470.5" y="486.6" width="13" height="15" rx="1" fill="#c88a30" stroke="#7a5010" stroke-width="0.6"/>
<rect x="1472" y="488.1" width="10" height="12" fill="#fafafa"/>
<rect x="1474.5" y="485.6" width="5" height="3" fill="#999" stroke="#555" stroke-width="0.5"/>
<path d="M1473.5 491.6H1480M1473.5 494.1H1480M1473.5 496.6H1479" stroke="#bbb" stroke-width="0.7"/>
</svg>
<div id="status" class="a"></div>
<svg class="a" style="left:0;top:0" width="1500" height="844" viewBox="0 0 1500 844">
<defs><clipPath id="hrc"><rect x="95" y="138" width="1042" height="23"/></clipPath><clipPath id="vrc"><rect x="72" y="161" width="23" height="570"/></clipPath></defs>
<g stroke="#5c5c5c" stroke-width="1" shape-rendering="crispEdges"><line x1="109.5" y1="154" x2="109.5" y2="161"/><line x1="125.5" y1="158" x2="125.5" y2="161"/><line x1="140.5" y1="154" x2="140.5" y2="161"/><line x1="156.5" y1="158" x2="156.5" y2="161"/><line x1="172.5" y1="154" x2="172.5" y2="161"/><line x1="188.5" y1="158" x2="188.5" y2="161"/><line x1="204.5" y1="154" x2="204.5" y2="161"/><line x1="220.5" y1="158" x2="220.5" y2="161"/><line x1="235.5" y1="154" x2="235.5" y2="161"/><line x1="251.5" y1="158" x2="251.5" y2="161"/><line x1="267.5" y1="154" x2="267.5" y2="161"/><line x1="283.5" y1="158" x2="283.5" y2="161"/><line x1="299.5" y1="154" x2="299.5" y2="161"/><line x1="315.5" y1="158" x2="315.5" y2="161"/><line x1="330.5" y1="154" x2="330.5" y2="161"/><line x1="346.5" y1="158" x2="346.5" y2="161"/><line x1="362.5" y1="154" x2="362.5" y2="161"/><line x1="378.5" y1="158" x2="378.5" y2="161"/><line x1="394.5" y1="154" x2="394.5" y2="161"/><line x1="410.5" y1="158" x2="410.5" y2="161"/><line x1="425.5" y1="154" x2="425.5" y2="161"/><line x1="441.5" y1="158" x2="441.5" y2="161"/><line x1="457.5" y1="154" x2="457.5" y2="161"/><line x1="473.5" y1="158" x2="473.5" y2="161"/><line x1="489.5" y1="154" x2="489.5" y2="161"/><line x1="504.5" y1="158" x2="504.5" y2="161"/><line x1="520.5" y1="154" x2="520.5" y2="161"/><line x1="536.5" y1="158" x2="536.5" y2="161"/><line x1="552.5" y1="154" x2="552.5" y2="161"/><line x1="568.5" y1="158" x2="568.5" y2="161"/><line x1="584.5" y1="154" x2="584.5" y2="161"/><line x1="599.5" y1="158" x2="599.5" y2="161"/><line x1="615.5" y1="154" x2="615.5" y2="161"/><line x1="631.5" y1="158" x2="631.5" y2="161"/><line x1="647.5" y1="154" x2="647.5" y2="161"/><line x1="663.5" y1="158" x2="663.5" y2="161"/><line x1="679.5" y1="154" x2="679.5" y2="161"/><line x1="694.5" y1="158" x2="694.5" y2="161"/><line x1="710.5" y1="154" x2="710.5" y2="161"/><line x1="726.5" y1="158" x2="726.5" y2="161"/><line x1="742.5" y1="154" x2="742.5" y2="161"/><line x1="758.5" y1="158" x2="758.5" y2="161"/><line x1="774.5" y1="154" x2="774.5" y2="161"/><line x1="789.5" y1="158" x2="789.5" y2="161"/><line x1="805.5" y1="154" x2="805.5" y2="161"/><line x1="821.5" y1="158" x2="821.5" y2="161"/><line x1="837.5" y1="154" x2="837.5" y2="161"/><line x1="853.5" y1="158" x2="853.5" y2="161"/><line x1="869.5" y1="154" x2="869.5" y2="161"/><line x1="884.5" y1="158" x2="884.5" y2="161"/><line x1="900.5" y1="154" x2="900.5" y2="161"/><line x1="916.5" y1="158" x2="916.5" y2="161"/><line x1="932.5" y1="154" x2="932.5" y2="161"/><line x1="948.5" y1="158" x2="948.5" y2="161"/><line x1="964.5" y1="154" x2="964.5" y2="161"/><line x1="979.5" y1="158" x2="979.5" y2="161"/><line x1="995.5" y1="154" x2="995.5" y2="161"/><line x1="1011.5" y1="158" x2="1011.5" y2="161"/><line x1="1027.5" y1="154" x2="1027.5" y2="161"/><line x1="1043.5" y1="158" x2="1043.5" y2="161"/><line x1="1059.5" y1="154" x2="1059.5" y2="161"/><line x1="1074.5" y1="158" x2="1074.5" y2="161"/><line x1="1090.5" y1="154" x2="1090.5" y2="161"/><line x1="1106.5" y1="158" x2="1106.5" y2="161"/><line x1="1122.5" y1="154" x2="1122.5" y2="161"/><line x1="88" y1="730.5" x2="95" y2="730.5"/><line x1="92" y1="714.5" x2="95" y2="714.5"/><line x1="88" y1="698.5" x2="95" y2="698.5"/><line x1="92" y1="683.5" x2="95" y2="683.5"/><line x1="88" y1="667.5" x2="95" y2="667.5"/><line x1="92" y1="651.5" x2="95" y2="651.5"/><line x1="88" y1="635.5" x2="95" y2="635.5"/><line x1="92" y1="619.5" x2="95" y2="619.5"/><line x1="88" y1="604.5" x2="95" y2="604.5"/><line x1="92" y1="588.5" x2="95" y2="588.5"/><line x1="88" y1="572.5" x2="95" y2="572.5"/><line x1="92" y1="556.5" x2="95" y2="556.5"/><line x1="88" y1="540.5" x2="95" y2="540.5"/><line x1="92" y1="524.5" x2="95" y2="524.5"/><line x1="88" y1="509.5" x2="95" y2="509.5"/><line x1="92" y1="493.5" x2="95" y2="493.5"/><line x1="88" y1="477.5" x2="95" y2="477.5"/><line x1="92" y1="461.5" x2="95" y2="461.5"/><line x1="88" y1="445.5" x2="95" y2="445.5"/><line x1="92" y1="429.5" x2="95" y2="429.5"/><line x1="88" y1="414.5" x2="95" y2="414.5"/><line x1="92" y1="398.5" x2="95" y2="398.5"/><line x1="88" y1="382.5" x2="95" y2="382.5"/><line x1="92" y1="366.5" x2="95" y2="366.5"/><line x1="88" y1="350.5" x2="95" y2="350.5"/><line x1="92" y1="334.5" x2="95" y2="334.5"/><line x1="88" y1="319.5" x2="95" y2="319.5"/><line x1="92" y1="303.5" x2="95" y2="303.5"/><line x1="88" y1="287.5" x2="95" y2="287.5"/><line x1="92" y1="271.5" x2="95" y2="271.5"/><line x1="88" y1="255.5" x2="95" y2="255.5"/><line x1="92" y1="239.5" x2="95" y2="239.5"/><line x1="88" y1="224.5" x2="95" y2="224.5"/><line x1="92" y1="208.5" x2="95" y2="208.5"/><line x1="88" y1="192.5" x2="95" y2="192.5"/><line x1="92" y1="176.5" x2="95" y2="176.5"/><line x1="88" y1="160.5" x2="95" y2="160.5"/></g>
<g clip-path="url(#hrc)" font-family="Liberation Sans" font-size="9.6" fill="#1a1a1a" text-anchor="middle"><text x="109.5" y="146.8">-220</text><text x="141.1" y="146.8">-200</text><text x="172.8" y="146.8">-180</text><text x="204.5" y="146.8">-160</text><text x="236.1" y="146.8">-140</text><text x="267.8" y="146.8">-120</text><text x="299.5" y="146.8">-100</text><text x="331.1" y="146.8">-80</text><text x="362.8" y="146.8">-60</text><text x="394.5" y="146.8">-40</text><text x="426.1" y="146.8">-20</text><text x="457.8" y="146.8">0</text><text x="489.5" y="146.8">20</text><text x="521.1" y="146.8">40</text><text x="552.8" y="146.8">60</text><text x="584.5" y="146.8">80</text><text x="616.1" y="146.8">100</text><text x="647.8" y="146.8">120</text><text x="679.5" y="146.8">140</text><text x="711.1" y="146.8">160</text><text x="742.8" y="146.8">180</text><text x="774.5" y="146.8">200</text><text x="806.1" y="146.8">220</text><text x="837.8" y="146.8">240</text><text x="869.5" y="146.8">260</text><text x="901.1" y="146.8">280</text><text x="932.8" y="146.8">300</text><text x="964.5" y="146.8">320</text><text x="996.1" y="146.8">340</text><text x="1027.8" y="146.8">360</text><text x="1059.5" y="146.8">380</text><text x="1091.1" y="146.8">400</text><text x="1122.8" y="146.8">420</text></g>
<g clip-path="url(#vrc)" font-family="Liberation Sans" font-size="9.6" fill="#1a1a1a" text-anchor="middle"><text transform="translate(81.6,730.9) rotate(-90)" x="0" y="0">-80</text><text transform="translate(81.6,699.2) rotate(-90)" x="0" y="0">-60</text><text transform="translate(81.6,667.5) rotate(-90)" x="0" y="0">-40</text><text transform="translate(81.6,635.9) rotate(-90)" x="0" y="0">-20</text><text transform="translate(81.6,604.2) rotate(-90)" x="0" y="0">0</text><text transform="translate(81.6,572.5) rotate(-90)" x="0" y="0">20</text><text transform="translate(81.6,540.9) rotate(-90)" x="0" y="0">40</text><text transform="translate(81.6,509.2) rotate(-90)" x="0" y="0">60</text><text transform="translate(81.6,477.5) rotate(-90)" x="0" y="0">80</text><text transform="translate(81.6,445.9) rotate(-90)" x="0" y="0">100</text><text transform="translate(81.6,414.2) rotate(-90)" x="0" y="0">120</text><text transform="translate(81.6,382.5) rotate(-90)" x="0" y="0">140</text><text transform="translate(81.6,350.9) rotate(-90)" x="0" y="0">160</text><text transform="translate(81.6,319.2) rotate(-90)" x="0" y="0">180</text><text transform="translate(81.6,287.5) rotate(-90)" x="0" y="0">200</text><text transform="translate(81.6,255.9) rotate(-90)" x="0" y="0">220</text><text transform="translate(81.6,224.2) rotate(-90)" x="0" y="0">240</text><text transform="translate(81.6,192.5) rotate(-90)" x="0" y="0">260</text><text transform="translate(81.6,160.9) rotate(-90)" x="0" y="0">280</text></g>
<path d="M612.9 151 L624.3 151 L618.5 157 Z" fill="#000"/>
<path d="M84.6 439.8 L84.6 450.6 L91.3 445.2 Z" fill="#000"/>
</svg>
<!-- scale combo -->
<div class="a" style="left:231px;top:88px;font-size:13.3px;letter-spacing:0.2px;line-height:16px;color:#1e1e1e">Scale:</div>
<div class="a" style="left:282px;top:84px;width:108px;height:20px;background:#fff;border-radius:5px;box-shadow:0 0 0 0.5px rgba(0,0,0,0.18),0 0.5px 1.5px rgba(0,0,0,0.25)"></div>
<div class="a" style="left:286px;top:85.5px;font-size:13px;line-height:16px;color:#1e1e1e">1:1</div>
<div class="a" style="left:372.5px;top:86px;width:15px;height:16px;background:linear-gradient(#3a94ff,#1a74f0);border-radius:4px"></div>
<svg class="a" style="left:372px;top:86px" width="16" height="16" viewBox="0 0 16 16"><path d="M5 6.3 L8 3.6 L11 6.3 M5 9.7 L8 12.4 L11 9.7" fill="none" stroke="#fff" stroke-width="1.4" stroke-linecap="round" stroke-linejoin="round"/></svg>
<!-- doc header -->
<svg class="a" style="left:72px;top:114px" width="50" height="24" viewBox="72 114 50 24">
<path d="M75 122 L83 130 M83 122 L75 130" stroke="#555" stroke-width="1.3"/>
<circle cx="102" cy="124.8" r="5.6" fill="#f4f4f4" stroke="#22408a" stroke-width="2"/>
<path d="M98 124.5 H106 M101 121 V128" stroke="#ccc" stroke-width="0.6"/>
<path d="M102.5 125 L106.5 129.5" stroke="#f0a010" stroke-width="2"/>
<circle cx="107.5" cy="130" r="1.4" fill="#e06060"/>
</svg>
<div class="a" style="left:603px;top:120px;font-size:11.6px;letter-spacing:0.35px;line-height:13px;color:#111">* Untitled 1</div>
<!-- scrollbar thumb -->
<div class="a" style="left:1142px;top:279px;width:8px;height:333px;background:#7f7f7f;border-radius:4px"></div>
<!-- bottom strip label -->
<div class="a" style="left:1082px;top:731px;width:72px;height:17px;background:#fff"></div>
<div class="a" style="left:1082px;top:732px;width:72px;text-align:right;font-size:13px;line-height:15px;color:#111">10 &lt; 100</div>
<!-- command history/input -->
<div class="a" style="left:77px;top:750.5px;font-size:13px;letter-spacing:0.32px;line-height:15px;color:#1414cc"><i>Command:</i> printpreview</div>
<div class="a" style="left:73px;top:778.5px;font-size:13.3px;letter-spacing:0.35px;line-height:15px;color:#111">Command:</div>
<div class="a" style="left:1127px;top:772px;width:26px;height:26px;background:linear-gradient(#f4f4f4,#e4e4e4);border:1px solid #a8a8a8"></div>
<svg class="a" style="left:1127px;top:772px" width="26" height="26" viewBox="0 0 26 26"><rect x="6.5" y="8.5" width="13" height="10" fill="#fff" stroke="#111" stroke-width="1"/><rect x="6.5" y="8.5" width="13" height="2.5" fill="#111"/></svg>
<!-- layer panel -->
<svg class="a" style="left:1155px;top:114px" width="300" height="70" viewBox="1155 114 300 70">
<defs><linearGradient id="lbtn" x1="0" y1="0" x2="0" y2="1"><stop offset="0" stop-color="#f8f8f8"/><stop offset="1" stop-color="#e8e8e8"/></linearGradient></defs>
<circle cx="1164" cy="124.5" r="6.8" fill="#666"/>
<path d="M1161 121.5 L1167 127.5 M1167 121.5 L1161 127.5" stroke="#fff" stroke-width="1.8"/>
<circle cx="1182" cy="124.5" r="6.8" fill="#666"/>
<rect x="1181" y="120.8" width="4.3" height="4" fill="none" stroke="#fff" stroke-width="1"/>
<rect x="1178.8" y="123.2" width="4.3" height="4" fill="#666" stroke="#fff" stroke-width="1"/>
<rect x="1155" y="134.5" width="300" height="1.5" fill="#d0d0d0"/>
<g stroke="#a8a8a8" stroke-width="1" fill="url(#lbtn)">
<rect x="1155.5" y="135.5" width="59" height="26"/><rect x="1215.5" y="135.5" width="59.5" height="26"/><rect x="1275.5" y="135.5" width="59.5" height="26"/><rect x="1335.5" y="135.5" width="59.5" height="26"/><rect x="1395.5" y="135.5" width="59" height="26"/>
</g>
<rect x="1155" y="161" width="300" height="1.5" fill="#c4c4c4"/>
<g id="eye"><path d="M1177.3 149 Q1179.5 142.6 1185 142.6 Q1190.5 142.6 1192.7 149 Q1190.5 154.4 1185 154.4 Q1179.5 154.4 1177.3 149 Z" fill="#000"/><ellipse cx="1185" cy="149.4" rx="4.9" ry="3.3" fill="#fff"/><path d="M1179.8 148 Q1185 144.6 1190.2 148 L1190.2 146 L1179.8 146 Z" fill="#000"/><circle cx="1185" cy="148.8" r="2.7" fill="#000"/><circle cx="1184.2" cy="148" r="0.55" fill="#aaa"/></g>
<g transform="translate(60 0)" opacity="0.4"><use href="#eye"/></g>
<path d="M1298.5 148.6 H1310.5 M1304.5 142.6 V154.6" stroke="#e00000" stroke-width="2.8"/>
<path d="M1358.5 148.6 H1370.5" stroke="#e00000" stroke-width="2.8"/>
<path d="M1418 155.5 L1419.5 151 L1430 140.8 L1432.6 143.4 L1422 153.8 Z" fill="#e8a830" stroke="#8a5a10" stroke-width="0.7"/>
<path d="M1430 140.8 L1432.6 143.4" stroke="#e83030" stroke-width="1.6"/>
<rect x="1181.5" y="169.5" width="15.5" height="8" fill="#fff" stroke="#111" stroke-width="1"/>
<path d="M1395 180 L1396.4 176 L1405.8 166.6 L1408.2 169 L1398.8 178.4 Z" fill="#e8a830" stroke="#8a5a10" stroke-width="0.7"/>
<path d="M1405.8 166.6 L1408.2 169" stroke="#e83030" stroke-width="1.6"/>
<g transform="translate(238 23.8)"><use href="#eye"/></g>
<rect x="1439.5" y="172.5" width="10.5" height="7.3" rx="0.8" fill="#c4c4c4"/>
<path d="M1441.5 172.8 V170 Q1441.5 166.8 1444.8 166.8 Q1448 166.8 1448 170 V172.8" fill="none" stroke="#c4c4c4" stroke-width="1.6"/>
</svg>
<div class="a" style="left:1296.5px;top:118.5px;font-size:11px;letter-spacing:0.5px;line-height:13px;color:#333">Layer List</div>
<div class="a" style="left:1203px;top:164.5px;font-size:14px;line-height:15px;color:#111">0</div>
<!-- status bar -->
<div class="st" style="left:2px;top:808px">101.6,100.6</div>
<div class="st" style="left:2px;top:828px">@1.6,0.6</div>
<div class="a" style="left:253px;top:803px;width:1px;height:39px;background:#8a8a8a"></div>
<div class="st" style="left:256px;top:808px;letter-spacing:0.3px">142.9787&lt;45°</div>
<div class="st" style="left:256px;top:828px;letter-spacing:0.3px">@1.7088&lt;21°</div>
<div class="a" style="left:507px;top:819.5px;width:5px;height:5px;border-radius:50%;background:#c4c4c4"></div>
<div class="a" style="left:940.5px;top:819.5px;width:5px;height:5px;border-radius:50%;background:#c4c4c4"></div>
<div class="a" style="left:1269.5px;top:819.5px;width:5px;height:5px;border-radius:50%;background:#c4c4c4"></div>
<div class="st" style="left:949px;top:817.5px;letter-spacing:0.3px">No entities selected.</div>
<svg class="a" style="left:714px;top:804px" width="24" height="34" viewBox="714 804 24 34">
<path d="M717 815 Q717 805.5 725.8 805.5 Q734.6 805.5 734.6 815 L734.6 826 Q734.6 835.5 725.8 835.5 Q717 835.5 717 826 Z" fill="#fff" stroke="#333" stroke-width="0.9"/>
<path d="M717 819.5 H734.6 M725.8 805.5 V819.5" stroke="#333" stroke-width="0.9"/>
<rect x="724.3" y="808" width="3" height="6.5" rx="1.5" fill="#fff" stroke="#333" stroke-width="0.9"/>
</svg>

<div class="a" style="left:112.5px;top:62px;width:78px;height:78px;border-radius:50%;border:8px solid rgba(128,156,188,0.36);filter:blur(1px)"></div>
<div class="a" style="left:113.5px;top:63px;width:76px;height:76px;border-radius:50%;border:1px solid rgba(110,140,175,0.35)"></div>
<div class="a" style="left:117px;top:66.5px;width:69px;height:69px;border-radius:50%;border:1px solid rgba(110,140,175,0.3)"></div>
<div class="a" style="left:120px;top:69.5px;width:63px;height:63px;border-radius:50%;border:1px solid rgba(110,140,175,0.22)"></div>
<div class="a" style="left:137px;top:129.5px;width:38.5px;height:25px;border-radius:3px;background:linear-gradient(#f6f8fb,#dde3ea);border:1px solid #c4c8cc;box-shadow:1px 1.5px 1.5px rgba(0,0,0,0.28)"></div>
<div class="a" style="left:142px;top:132.5px;font-size:14.6px;line-height:17px;color:#000;letter-spacing:0.1px">Print</div>
<svg class="a" style="left:145px;top:98px" width="28" height="36" viewBox="145 98 28 36">
<path d="M152 102.5 L152 125.5 L157.2 120.6 L161.8 130.2 L165.6 128.6 L161.2 119.2 L167.8 119 Z" fill="#fff" stroke="#000" stroke-width="1.5" stroke-linejoin="round"/>
</svg>

</body></html>
